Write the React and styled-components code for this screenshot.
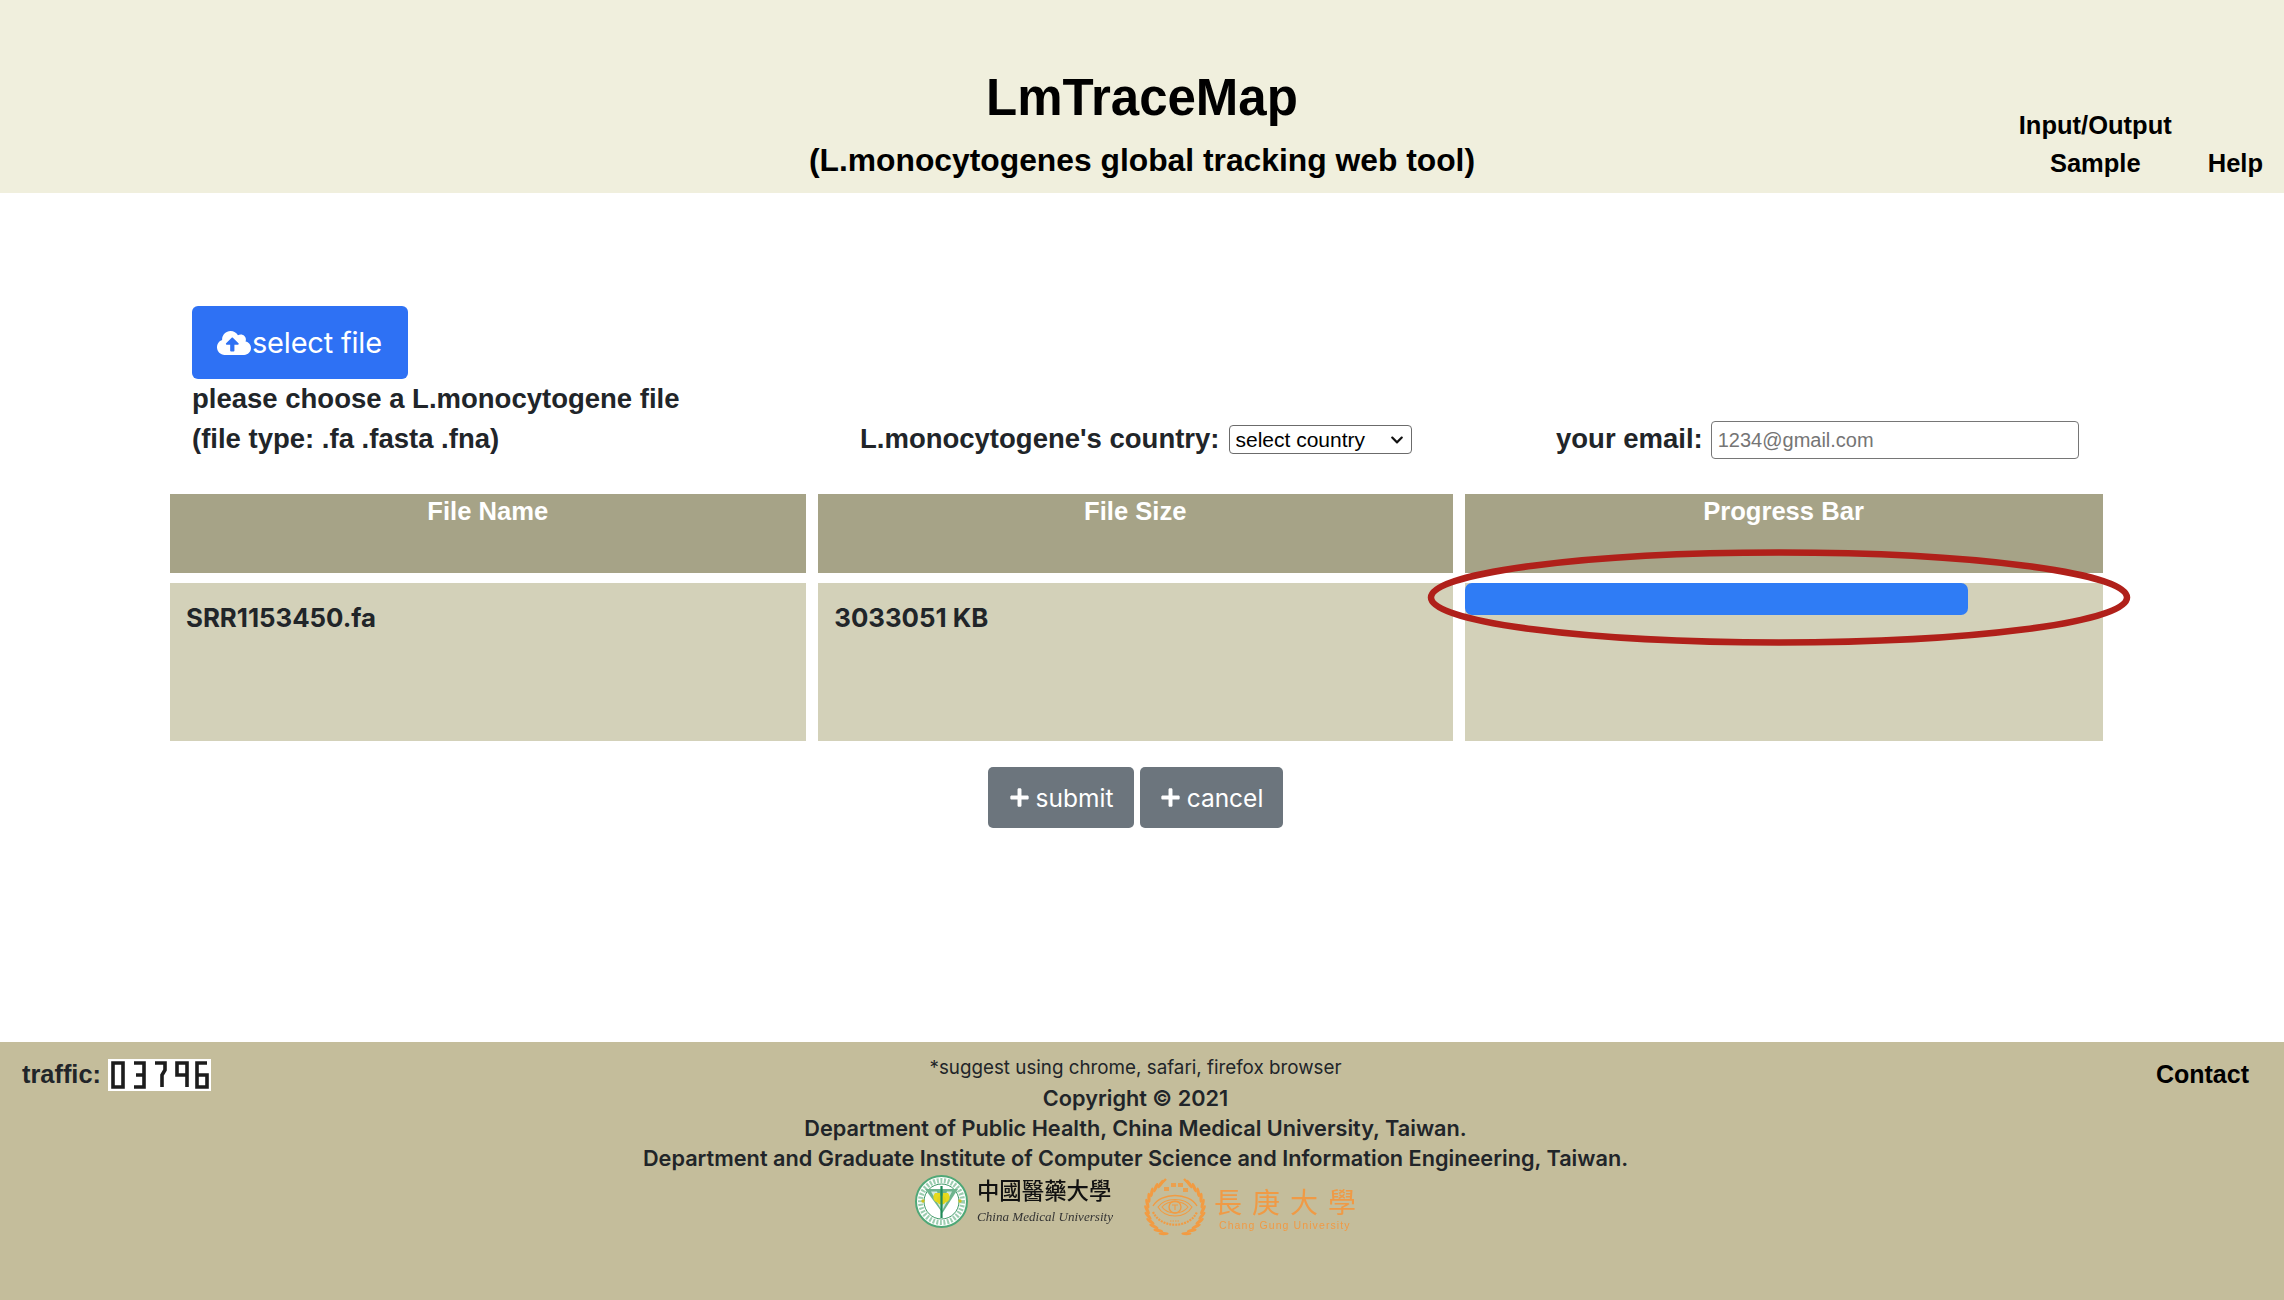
import React from "react";
import styled, { createGlobalStyle } from "styled-components";
import { FaCloudUploadAlt, FaPlus, FaChevronDown } from "react-icons/fa";

const Global = createGlobalStyle`
  html, body { margin: 0; padding: 0; background: #fff; }
  body { font-family: "Liberation Sans", Arial, sans-serif; color: #212529; }
  * { box-sizing: border-box; }
`;

const Page = styled.div`
  display: flex;
  flex-direction: column;
  height: 1300px;
  overflow: hidden;
`;

const Header = styled.header`
  height: 193px;
  background: #f0efdd;
  display: grid;
  grid-template-columns: 1fr auto 1fr;
  color: #000;
  font-weight: 700;
`;

const TitleBlock = styled.div`
  grid-column: 2;
  text-align: center;
  padding-top: 66px;
`;

const Title = styled.h1`
  margin: 0;
  font-size: 51px;
  line-height: 64px;
  font-weight: 700;
`;

const Subtitle = styled.div`
  margin-top: 12px;
  font-size: 31.8px;
  line-height: 36px;
`;

const Nav = styled.nav`
  grid-column: 3;
  justify-self: end;
  display: flex;
  align-items: flex-end;
  gap: 36px;
  padding: 0 21px 11px 0;
  font-size: 25.5px;
  line-height: 38px;
  text-align: center;
`;

const NavStack = styled.div`
  display: flex;
  flex-direction: column;
  align-items: center;
`;

const Main = styled.main`
  flex: 1;
  padding-top: 113px;
`;

const ControlRow = styled.section`
  display: flex;
  align-items: flex-end;
  padding-left: 192px;
  height: 153px;
  font-size: 27.5px;
  font-weight: 700;
  line-height: 40px;
`;

const UploadColumn = styled.div`
  width: 668px;
`;

const SelectButton = styled.button`
  display: flex;
  align-items: center;
  width: 216px;
  height: 73px;
  padding: 0 0 0 25px;
  border: 0;
  border-radius: 6px;
  background: #2e71f4;
  color: #fff;
  font: 400 29px Inter, "Liberation Sans", sans-serif;
  letter-spacing: -0.2px;
  svg { width: 34px; height: 34px; flex: none; margin-right: 1px; }
`;

const FieldLabel = styled.label`
  display: flex;
  align-items: center;
  height: 40px;
  width: ${(p) => p.$width};
`;

const SelectWrap = styled.span`
  position: relative;
  display: block;
  width: 183px;
  height: 29px;
  margin: 1px 0 0 9px;
  svg {
    position: absolute;
    right: 8px;
    top: 8px;
    width: 14px;
    height: 14px;
    color: #111;
    pointer-events: none;
  }
`;

const CountrySelect = styled.select`
  appearance: none;
  display: block;
  width: 100%;
  height: 100%;
  padding: 0 0 0 6px;
  border: 1px solid #6b6b6b;
  border-radius: 4px;
  background: #fff;
  color: #000;
  font: 400 21px "Liberation Sans", sans-serif;
`;

const EmailInput = styled.input`
  width: 368px;
  height: 38px;
  margin: 2px 0 0 8px;
  padding: 0 6px;
  border: 1.5px solid #767676;
  border-radius: 4px;
  background: #fff;
  font: 400 20px "Liberation Sans", sans-serif;
  &::placeholder { color: #757575; opacity: 1; }
`;

const Table = styled.section`
  position: relative;
  width: 1933px;
  margin: 35px 0 0 169.5px;
  display: grid;
  grid-template-columns: 636.5px 635px 638px;
  grid-template-rows: 79px 158px;
  column-gap: 11.75px;
  row-gap: 10px;
`;

const HeadCell = styled.div`
  background: #a6a387;
  color: #fff;
  text-align: center;
  font-size: 25.6px;
  font-weight: 700;
  line-height: 34px;
`;

const BodyCell = styled.div`
  background: #d3d1b9;
  padding: 17px 16.5px;
  font: 700 25.8px/36px Inter, "Liberation Sans", sans-serif;
  color: #212529;
`;

const ProgressCell = styled.div`
  background: #d3d1b9;
`;

const ProgressBar = styled.div`
  height: 32px;
  background: #2f7cf5;
  border-radius: 7px;
`;

const Highlight = styled.svg`
  position: absolute;
  left: 1258.5px;
  top: 55px;
  width: 702px;
  height: 97px;
  overflow: visible;
  pointer-events: none;
`;

const ActionRow = styled.div`
  display: flex;
  justify-content: center;
  gap: 6px;
  margin: 26px 0 0 -13px;
`;

const ActionButton = styled.button`
  display: flex;
  align-items: center;
  justify-content: center;
  width: ${(p) => p.$width};
  height: 61px;
  padding: 0;
  gap: 6px;
  border: 0;
  border-radius: 5px;
  background: #6c757d;
  color: #fff;
  font: 400 24.5px Inter, "Liberation Sans", sans-serif;
  svg { width: 21px; height: 21px; }
`;

const Footer = styled.footer`
  height: 258px;
  background: #c4bd9b;
  display: grid;
  grid-template-columns: 1fr auto 1fr;
  padding-right: 13px;
`;

const Traffic = styled.div`
  display: flex;
  align-items: flex-start;
  gap: 7px;
  padding: 17px 0 0 22px;
  font-size: 25.4px;
  font-weight: 700;
  line-height: 30px;
`;

const Counter = styled.svg`
  display: block;
  width: 103px;
  height: 32px;
  background: #fff;
`;

const CounterStrokes = styled.g`
  fill: none;
  stroke: #1c1c1c;
  stroke-width: 3.6;
  filter: blur(0.5px);
`;

const FooterCenter = styled.div`
  padding-top: 11px;
  text-align: center;
  font: 600 21.7px/30px Inter, "Liberation Sans", sans-serif;
  color: #212529;
`;

const Note = styled.div`
  font-size: 18.8px;
  font-weight: 400;
`;

const LogoRow = styled.div`
  display: flex;
  justify-content: center;
  align-items: flex-start;
  margin-top: 2px;
`;

const LogoText = styled.div`
  display: flex;
  flex-direction: column;
  align-items: flex-start;
  margin-left: ${(p) => p.$left};
  margin-right: ${(p) => p.$right || 0};
  padding-top: ${(p) => p.$top};
  filter: blur(0.3px);
`;

const CmuName = styled.div`
  font: 500 22.4px/26px "Noto Sans CJK TC", serif;
  color: #111;
  white-space: nowrap;
`;

const CmuEnglish = styled.div`
  margin-top: 6px;
  font: italic 400 13.1px/17px "Liberation Serif", serif;
  color: #333;
  white-space: nowrap;
`;

const CguName = styled.div`
  font: 400 28px/30px "Noto Sans CJK TC", serif;
  letter-spacing: 10px;
  margin-right: -10px;
  color: #f09a45;
  white-space: nowrap;
`;

const CguEnglish = styled.div`
  margin: 3px 0 0 5px;
  font: 400 10.5px/13px "Liberation Sans", sans-serif;
  letter-spacing: 1.1px;
  color: #f09a45;
  white-space: nowrap;
`;

const Seal = styled.svg`
  flex: none;
  display: block;
  width: ${(p) => p.$size}px;
  height: ${(p) => p.$size}px;
  margin-top: ${(p) => p.$top};
  filter: blur(0.3px);
`;

const Contact = styled.div`
  justify-self: end;
  padding: 17px 22px 0 0;
  color: #000;
  font-size: 25px;
  font-weight: 700;
  line-height: 30px;
`;

const SEGMENTS = {
  0: "M1 1H11V25H1Z",
  3: "M1 1H11V25H1M3 13H11",
  7: "M1 1H11V8L8 13V25",
  9: "M11 25V1H1V13H11",
  6: "M11 1H1V25H11V13H1",
};

function CounterImage({ value }) {
  const starts = [4, 25, 46, 68, 88];
  return (
    <Counter viewBox="0 0 103 32" role="img" aria-label={value}>
      <CounterStrokes>
        {value.split("").map((d, i) => (
          <path key={i} d={SEGMENTS[d]} transform={`translate(${starts[i]} 3)`} />
        ))}
      </CounterStrokes>
    </Counter>
  );
}

function CmuSeal() {
  return (
    <Seal $size={53} $top="0px" viewBox="0 0 53 53" aria-hidden="true">
      <circle cx="26.5" cy="26.5" r="25.5" fill="#fff" stroke="#4fa877" strokeWidth="2" />
      <circle cx="26.5" cy="26.5" r="21" fill="none" stroke="#9ccdb0" strokeWidth="5" strokeDasharray="2 1.6" />
      <circle cx="26.5" cy="26.5" r="17.5" fill="#fff" stroke="#3f9a68" strokeWidth="1" />
      <path d="M10 14H43L27.5 38Z" fill="#6db48d" />
      <path d="M16 16.5H22L27 31L32 16.5H37L27 36Z" fill="#fff" opacity=".7" />
      <path d="M20 18C16 23 20 29 25 27V18ZM33 18C37 23 33 29 28 27V18Z" fill="#e6da1c" />
      <circle cx="26.5" cy="25" r="4.5" fill="#e0d41b" />
      <path d="M26.5 11V43" stroke="#1f8a58" strokeWidth="2.2" />
      <circle cx="8" cy="26" r="1.7" fill="#c9c21f" />
      <circle cx="45" cy="26" r="1.7" fill="#c9c21f" />
    </Seal>
  );
}

function CguSeal() {
  const leaves = [];
  for (let i = 0; i < 11; i++) {
    const a = 24 + i * 12.5;
    leaves.push(<ellipse key={`l${i}`} cx="32" cy="60" rx="5" ry="1.6" fill="#f29b42" transform={`rotate(${a} 32 32) rotate(-24 32 60)`} />);
    leaves.push(<ellipse key={`r${i}`} cx="32" cy="60" rx="5" ry="1.6" fill="#f29b42" transform={`rotate(${-a} 32 32) rotate(24 32 60)`} />);
  }
  return (
    <Seal $size={64} $top="1px" viewBox="0 0 64 64" aria-hidden="true">
      {leaves}
      <path d="M17 9L23 3M47 9L41 3" stroke="#f29b42" strokeWidth="2.4" />
      <g fill="none" stroke="#f29b42" strokeWidth="1.1">
        <path d="M10 30C18 16 46 16 54 30" strokeWidth="1.4" />
        <path d="M10 36C18 53 46 53 54 36" strokeWidth="2.2" strokeDasharray="2 1" />
        <path d="M15 31C22 21 42 21 49 31C42 43 22 43 15 31Z" />
        <path d="M19 31C25 24 39 24 45 31C39 39 25 39 19 31Z" />
        <circle cx="32" cy="31" r="6" strokeWidth="1.4" />
        <path d="M29 29H35M32 29V34" />
      </g>
      <path d="M21 15H26V11H21ZM28 11H33V7H28ZM35 7H40V11H35ZM40 12H45V16H40Z" fill="#f29b42" opacity=".85" />
      <path d="M27 45H37" stroke="#f29b42" strokeWidth="1.2" strokeDasharray="1.5 1" />
    </Seal>
  );
}

export default function App() {
  return (
    <Page>
      <Global />
      <Header>
        <TitleBlock>
          <Title>LmTraceMap</Title>
          <Subtitle>(L.monocytogenes global tracking web tool)</Subtitle>
        </TitleBlock>
        <Nav>
          <NavStack>
            <span>Input/Output</span>
            <span>Sample</span>
          </NavStack>
          <span>Help</span>
        </Nav>
      </Header>
      <Main>
        <ControlRow>
          <UploadColumn>
            <SelectButton type="button">
              <FaCloudUploadAlt />
              select file
            </SelectButton>
            <div>please choose a L.monocytogene file</div>
            <div>(file type: .fa .fasta .fna)</div>
          </UploadColumn>
          <FieldLabel $width="696px">
            L.monocytogene's country:
            <SelectWrap>
              <CountrySelect defaultValue="">
                <option value="">select country</option>
              </CountrySelect>
              <FaChevronDown />
            </SelectWrap>
          </FieldLabel>
          <FieldLabel>
            your email:
            <EmailInput placeholder="1234@gmail.com" />
          </FieldLabel>
        </ControlRow>
        <Table>
          <HeadCell>File Name</HeadCell>
          <HeadCell>File Size</HeadCell>
          <HeadCell>Progress Bar</HeadCell>
          <BodyCell>SRR1153450.fa</BodyCell>
          <BodyCell>3033051 KB</BodyCell>
          <ProgressCell>
            <ProgressBar style={{ width: `${(503 / 638) * 100}%` }} />
          </ProgressCell>
          <Highlight viewBox="0 0 702 97" aria-hidden="true">
            <ellipse cx="351" cy="48.5" rx="348" ry="45" fill="none" stroke="#b0201a" strokeWidth="6.5" />
          </Highlight>
        </Table>
        <ActionRow>
          <ActionButton type="button" $width="146px">
            <FaPlus />
            submit
          </ActionButton>
          <ActionButton type="button" $width="143px">
            <FaPlus />
            cancel
          </ActionButton>
        </ActionRow>
      </Main>
      <Footer>
        <Traffic>
          traffic:
          <CounterImage value="03796" />
        </Traffic>
        <FooterCenter>
          <Note>*suggest using chrome, safari, firefox browser</Note>
          <div>Copyright © 2021</div>
          <div>Department of Public Health, China Medical University, Taiwan.</div>
          <div>Department and Graduate Institute of Computer Science and Information Engineering, Taiwan.</div>
          <LogoRow>
            <CmuSeal />
            <LogoText $left="9px" $right="30px" $top="1px">
              <CmuName>中國醫藥大學</CmuName>
              <CmuEnglish>China Medical University</CmuEnglish>
            </LogoText>
            <CguSeal />
            <LogoText $left="7px" $top="11px">
              <CguName>長庚大學</CguName>
              <CguEnglish>Chang Gung University</CguEnglish>
            </LogoText>
          </LogoRow>
        </FooterCenter>
        <Contact>Contact</Contact>
      </Footer>
    </Page>
  );
}
